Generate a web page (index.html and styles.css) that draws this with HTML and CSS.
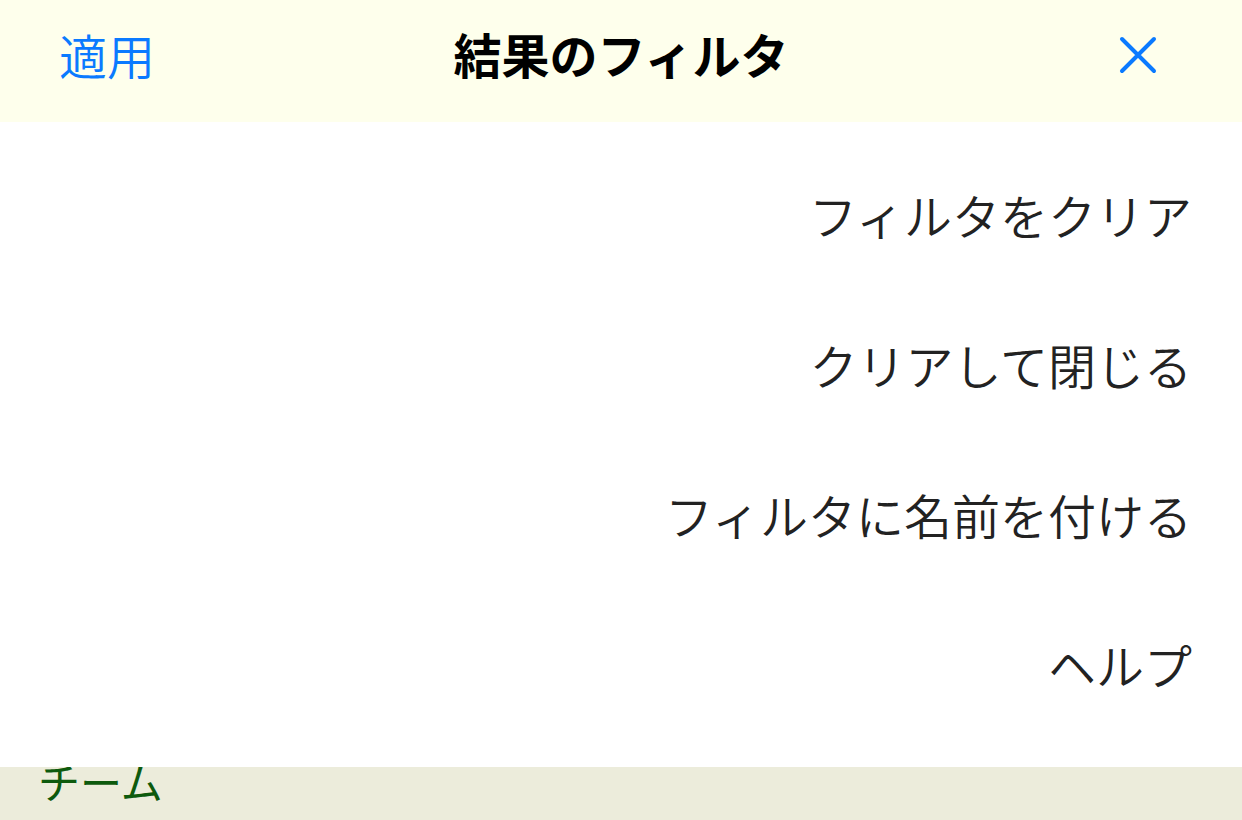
FILE: index.html
```html
<!DOCTYPE html>
<html lang="ja">
<head>
<meta charset="utf-8">
<link rel="stylesheet" href="styles.css">
</head>
<body>
<div class="screen">
  <header class="topbar">
    <span class="apply">適用</span>
    <span class="title">結果のフィルタ</span>
    <span class="close">
      <svg width="38" height="38" viewBox="0 0 38 38"><path d="M3 3 L35 35 M35 3 L3 35" stroke="#0A7AFF" stroke-width="4" stroke-linecap="round" fill="none"/></svg>
    </span>
  </header>
  <ul class="menu">
    <li class="item">フィルタをクリア</li>
    <li class="item">クリアして閉じる</li>
    <li class="item">フィルタに名前を付ける</li>
    <li class="item">ヘルプ</li>
  </ul>
  <div class="under">
    <span class="team">チーム</span>
  </div>
</div>
</body>
</html>
```

FILE: styles.css
```css
* { box-sizing: border-box; }
html, body { margin: 0; padding: 0; }
body {
  width: 1242px;
  height: 820px;
  overflow: hidden;
  font-family: "Noto Sans CJK JP", "Noto Sans", sans-serif;
  background: #ffffff;
}
.screen {
  display: flex;
  flex-direction: column;
  height: 820px;
}
.topbar {
  height: 122px;
  background: #FEFFEC;
  display: flex;
  align-items: center;
  justify-content: space-between;
  padding: 0 85px 0 59px;
  position: relative;
  flex: none;
}
.apply {
  color: #0A7AFF;
  font-size: 48px;
  font-weight: 350;
  line-height: 1;
  margin-top: -14px;
}
.title {
  position: absolute;
  left: 0;
  right: 0;
  text-align: center;
  font-size: 48px;
  font-weight: 700;
  color: #000;
  line-height: 1;
  margin-top: -16px;
  pointer-events: none;
}
.close {
  display: flex;
  margin-top: -12px;
}
.menu {
  list-style: none;
  margin: 0;
  padding: 17px 50px 28px 0;
  flex: none;
  height: 645px;
  background: #fff;
}
.item {
  height: 150px;
  display: flex;
  align-items: center;
  justify-content: flex-end;
  font-size: 48px;
  font-weight: 350;
  color: #222;
  line-height: 1;
}
.under {
  flex: 1;
  background: #ECECDB;
  overflow: hidden;
  padding-left: 38px;
}
.team {
  display: block;
  font-size: 42px;
  font-weight: 400;
  line-height: 1;
  color: #0D5A0D;
  margin-top: -7px;
}
```
